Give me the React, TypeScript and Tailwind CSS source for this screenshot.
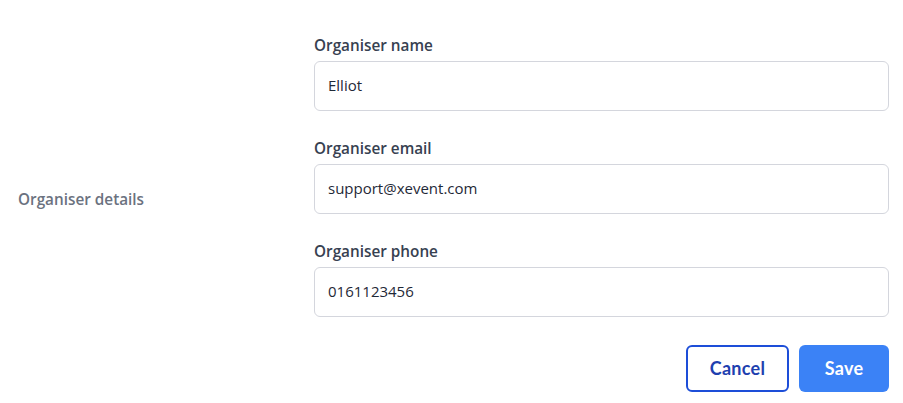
import React from "react";

const fields = [
  { label: "Organiser name", value: "Elliot" },
  { label: "Organiser email", value: "support@xevent.com" },
  { label: "Organiser phone", value: "0161123456" },
];

export default function App() {
  return (
    <div className="w-[903px] h-[403px] bg-white" style={{ fontFamily: '"Open Sans", sans-serif' }}>
      <div className="flex items-start pt-[35px]">
        <div className="w-[314px] shrink-0 pl-[18px] pt-[154px] text-[15.3px] leading-5 font-semibold text-[#6b7280]">
          Organiser details
        </div>
        <div className="w-[575px] flex flex-col">
          {fields.map((f, i) => (
            <div key={f.label} className={i > 0 ? "mt-[27px]" : ""}>
              <div className="text-[15.3px] leading-5 font-semibold text-[#374151]">{f.label}</div>
              <div className="mt-[6px] h-[50px] rounded-[6px] border border-[#d4d6dd] flex items-center px-[13px] pb-[1px] text-[15px] text-[#1f2937]">
                {f.value}
              </div>
            </div>
          ))}
          <div className="flex justify-end gap-[10px] mt-[28px]" style={{ fontFamily: 'Lato, sans-serif' }}>
            <button className="w-[103px] h-[47px] rounded-[6px] border-2 border-[#1d4ed8] text-[#1e40af] text-[18px] font-bold tracking-[0.3px] bg-white">
              Cancel
            </button>
            <button className="w-[90px] h-[47px] rounded-[6px] bg-[#3b82f6] text-white text-[18px] font-bold tracking-[0.3px]">
              Save
            </button>
          </div>
        </div>
      </div>
    </div>
  );
}
